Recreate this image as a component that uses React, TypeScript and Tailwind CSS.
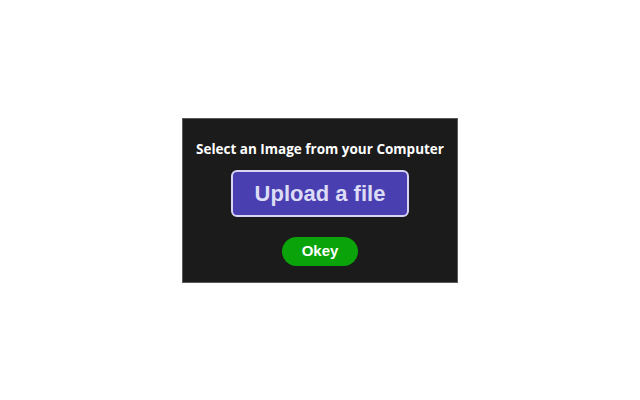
export default function App() {
  return (
    <div className="flex h-screen w-full items-center justify-center bg-white">
      <div className="flex h-[165px] w-[276px] flex-col items-center border border-[#5a5a5a] bg-[#1b1b1b] pt-[20px]">
        <p className="font-['Open_Sans',sans-serif] text-[13.5px] leading-[20px] font-bold text-white">
          Select an Image from your Computer
        </p>
        <button className="mt-[11px] flex h-[47px] w-[178px] items-center justify-center rounded-[6px] border-2 border-[#d8d4f4] bg-[#4a3fb0] font-['Liberation_Sans',Arial,sans-serif] text-[22px] font-bold text-[#dcdcf6]">
          Upload a file
        </button>
        <button className="mt-[20px] flex h-[29px] w-[76px] items-center justify-center rounded-full bg-[#0aa30a] font-['Liberation_Sans',Arial,sans-serif] text-[15px] font-bold text-white">
          Okey
        </button>
      </div>
    </div>
  );
}
